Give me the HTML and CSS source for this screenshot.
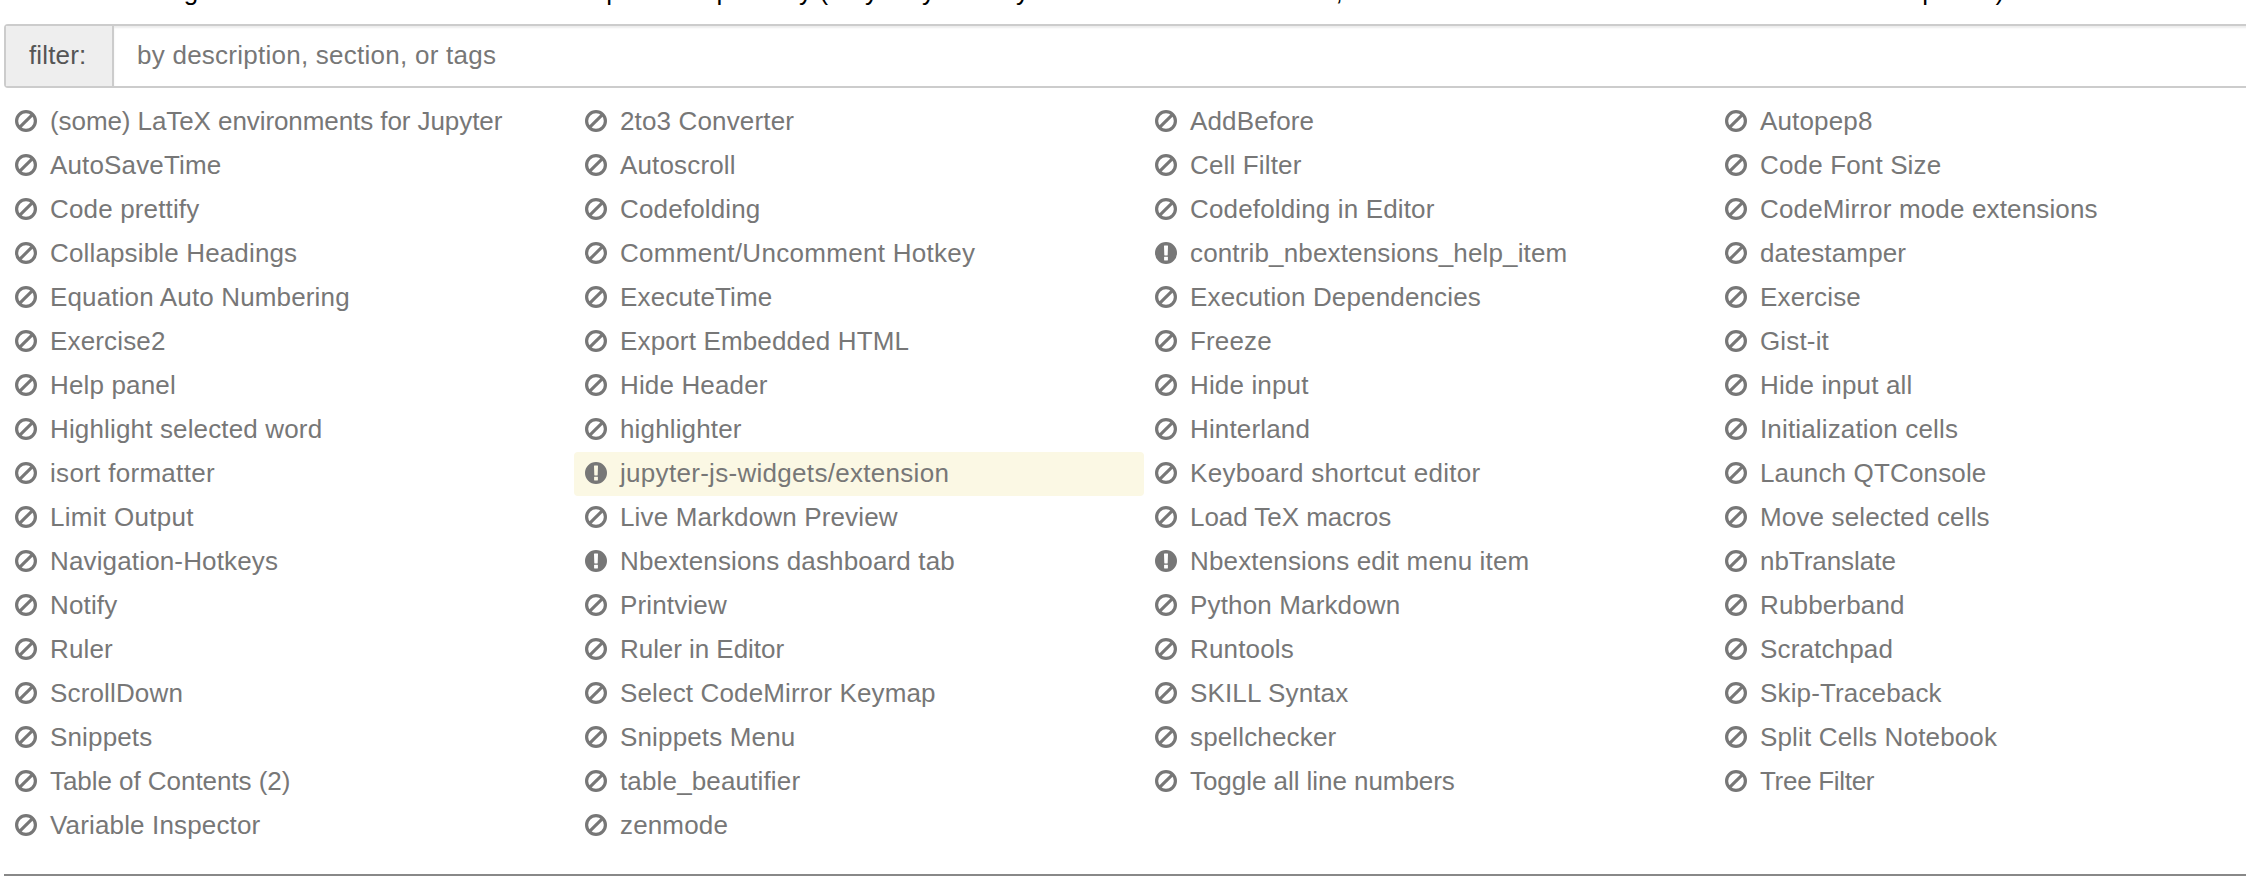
FILE: index.html
```html
<!DOCTYPE html>
<html lang="en">
<head>
<meta charset="utf-8">
<title>Nbextensions</title>
<link rel="stylesheet" href="styles.css">
</head>
<body>
<svg class="defs" aria-hidden="true">
<symbol id="ban" viewBox="0 0 22 22"><circle cx="11" cy="11" r="9.4" fill="none" stroke="currentColor" stroke-width="3.2"/><path d="M4.6 17.4 17.4 4.6" stroke="currentColor" stroke-width="3.1"/></symbol>
<symbol id="warn" viewBox="0 0 22 22"><path fill="currentColor" fill-rule="evenodd" d="M11 0a11 11 0 1 1 0 22a11 11 0 0 1 0-22zM9.500 3.500q-.5 0-.5.500l.3 9q0 .4.400.4h2.600q.4 0 .4-.4l.3-9q0-.5-.5-.5zM9.500 14.700q-.4 0-.4.400v2.900q0 .4.400.4h3q.4 0 .4-.4v-2.900q0-.4-.4-.4z"/></symbol>
</svg>
<main class="page">
<div class="compat"><span class="compat-text">disable configuration for nbextensions without explicit compatibility (they may break your notebook environment, but can be useful to show for nbextension development)</span></div>
<div class="filter"><span class="filter-label">filter:</span><span class="filter-input">by description, section, or tags</span></div>
<ul class="list">
<li class="first"><svg><use href="#ban"/></svg>(some) LaTeX environments for Jupyter</li>
<li><svg><use href="#ban"/></svg>2to3 Converter</li>
<li><svg><use href="#ban"/></svg>AddBefore</li>
<li><svg><use href="#ban"/></svg>Autopep8</li>
<li><svg><use href="#ban"/></svg>AutoSaveTime</li>
<li><svg><use href="#ban"/></svg>Autoscroll</li>
<li><svg><use href="#ban"/></svg>Cell Filter</li>
<li><svg><use href="#ban"/></svg>Code Font Size</li>
<li><svg><use href="#ban"/></svg>Code prettify</li>
<li><svg><use href="#ban"/></svg>Codefolding</li>
<li><svg><use href="#ban"/></svg>Codefolding in Editor</li>
<li><svg><use href="#ban"/></svg>CodeMirror mode extensions</li>
<li><svg><use href="#ban"/></svg>Collapsible Headings</li>
<li class="wide"><svg><use href="#ban"/></svg>Comment/Uncomment Hotkey</li>
<li><svg><use href="#warn"/></svg>contrib_nbextensions_help_item</li>
<li><svg><use href="#ban"/></svg>datestamper</li>
<li><svg><use href="#ban"/></svg>Equation Auto Numbering</li>
<li><svg><use href="#ban"/></svg>ExecuteTime</li>
<li><svg><use href="#ban"/></svg>Execution Dependencies</li>
<li><svg><use href="#ban"/></svg>Exercise</li>
<li><svg><use href="#ban"/></svg>Exercise2</li>
<li><svg><use href="#ban"/></svg>Export Embedded HTML</li>
<li><svg><use href="#ban"/></svg>Freeze</li>
<li><svg><use href="#ban"/></svg>Gist-it</li>
<li><svg><use href="#ban"/></svg>Help panel</li>
<li><svg><use href="#ban"/></svg>Hide Header</li>
<li><svg><use href="#ban"/></svg>Hide input</li>
<li><svg><use href="#ban"/></svg>Hide input all</li>
<li><svg><use href="#ban"/></svg>Highlight selected word</li>
<li><svg><use href="#ban"/></svg>highlighter</li>
<li><svg><use href="#ban"/></svg>Hinterland</li>
<li><svg><use href="#ban"/></svg>Initialization cells</li>
<li class="wide"><svg><use href="#ban"/></svg>isort formatter</li>
<li class="selected wide"><svg><use href="#warn"/></svg>jupyter-js-widgets/extension</li>
<li class="wide"><svg><use href="#ban"/></svg>Keyboard shortcut editor</li>
<li><svg><use href="#ban"/></svg>Launch QTConsole</li>
<li class="wide"><svg><use href="#ban"/></svg>Limit Output</li>
<li><svg><use href="#ban"/></svg>Live Markdown Preview</li>
<li class="tight"><svg><use href="#ban"/></svg>Load TeX macros</li>
<li><svg><use href="#ban"/></svg>Move selected cells</li>
<li><svg><use href="#ban"/></svg>Navigation-Hotkeys</li>
<li><svg><use href="#warn"/></svg>Nbextensions dashboard tab</li>
<li><svg><use href="#warn"/></svg>Nbextensions edit menu item</li>
<li class="tight"><svg><use href="#ban"/></svg>nbTranslate</li>
<li><svg><use href="#ban"/></svg>Notify</li>
<li><svg><use href="#ban"/></svg>Printview</li>
<li><svg><use href="#ban"/></svg>Python Markdown</li>
<li><svg><use href="#ban"/></svg>Rubberband</li>
<li><svg><use href="#ban"/></svg>Ruler</li>
<li class="tight"><svg><use href="#ban"/></svg>Ruler in Editor</li>
<li><svg><use href="#ban"/></svg>Runtools</li>
<li><svg><use href="#ban"/></svg>Scratchpad</li>
<li><svg><use href="#ban"/></svg>ScrollDown</li>
<li><svg><use href="#ban"/></svg>Select CodeMirror Keymap</li>
<li><svg><use href="#ban"/></svg>SKILL Syntax</li>
<li><svg><use href="#ban"/></svg>Skip-Traceback</li>
<li><svg><use href="#ban"/></svg>Snippets</li>
<li><svg><use href="#ban"/></svg>Snippets Menu</li>
<li><svg><use href="#ban"/></svg>spellchecker</li>
<li><svg><use href="#ban"/></svg>Split Cells Notebook</li>
<li class="tight"><svg><use href="#ban"/></svg>Table of Contents (2)</li>
<li><svg><use href="#ban"/></svg>table_beautifier</li>
<li class="tight"><svg><use href="#ban"/></svg>Toggle all line numbers</li>
<li class="tree"><svg><use href="#ban"/></svg>Tree Filter</li>
<li><svg><use href="#ban"/></svg>Variable Inspector</li>
<li><svg><use href="#ban"/></svg>zenmode</li>
</ul>
<hr class="rule">
</main>
</body>
</html>
```

FILE: styles.css
```css
* { box-sizing: border-box; }
body {
  margin: 0;
  background: #fff;
  color: #000;
  font: 26px/36px "Liberation Sans", Arial, sans-serif;
  font-kerning: normal;
  overflow: hidden;
}
.defs { display: none; }
.page { width: 2290px; height: 878px; padding-left: 4px; overflow: hidden; }
.compat {
  display: flex;
  align-items: flex-end;
  height: 24px;
  padding: 0 0 15px 33px;
  overflow: hidden;
  white-space: nowrap;
  letter-spacing: .175px;
}
.compat-text { flex: none; transform: translateY(.35px) rotate(.0001deg); }
.filter {
  display: flex;
  height: 64px;
  border: 2px solid #ccc;
  border-radius: 4px;
  line-height: 58px;
}
.filter-label {
  width: 108px;
  padding-left: 23px;
  border-right: 2px solid #ccc;
  background: #eee;
  color: #555;
  letter-spacing: .15px;
}
.filter-input {
  flex: 1;
  padding-left: 23px;
  color: #777;
  letter-spacing: .25px;
  box-shadow: inset 0 2px 2px rgba(0, 0, 0, .075);
}
.list {
  display: grid;
  grid-template-columns: repeat(4, 570px);
  grid-auto-rows: 44px;
  margin: 12px 0 0;
  padding: 0;
  list-style: none;
  color: #777;
  letter-spacing: .15px;
}
.list li {
  display: flex;
  align-items: center;
  gap: 13px;
  padding: 0 0 2px 11px;
  border-radius: 4px;
  white-space: nowrap;
}
.list .first { letter-spacing: -.08px; }
.list .wide { letter-spacing: .3px; }
.list .tight { letter-spacing: -.05px; }
.list .tree { letter-spacing: -.3px; }
.list svg { flex: none; width: 22px; height: 22px; }
.list .selected { background: #fbf8e4; }
.rule { height: 2px; margin: 26px 0 0; border: 0; background: #888; }
```
